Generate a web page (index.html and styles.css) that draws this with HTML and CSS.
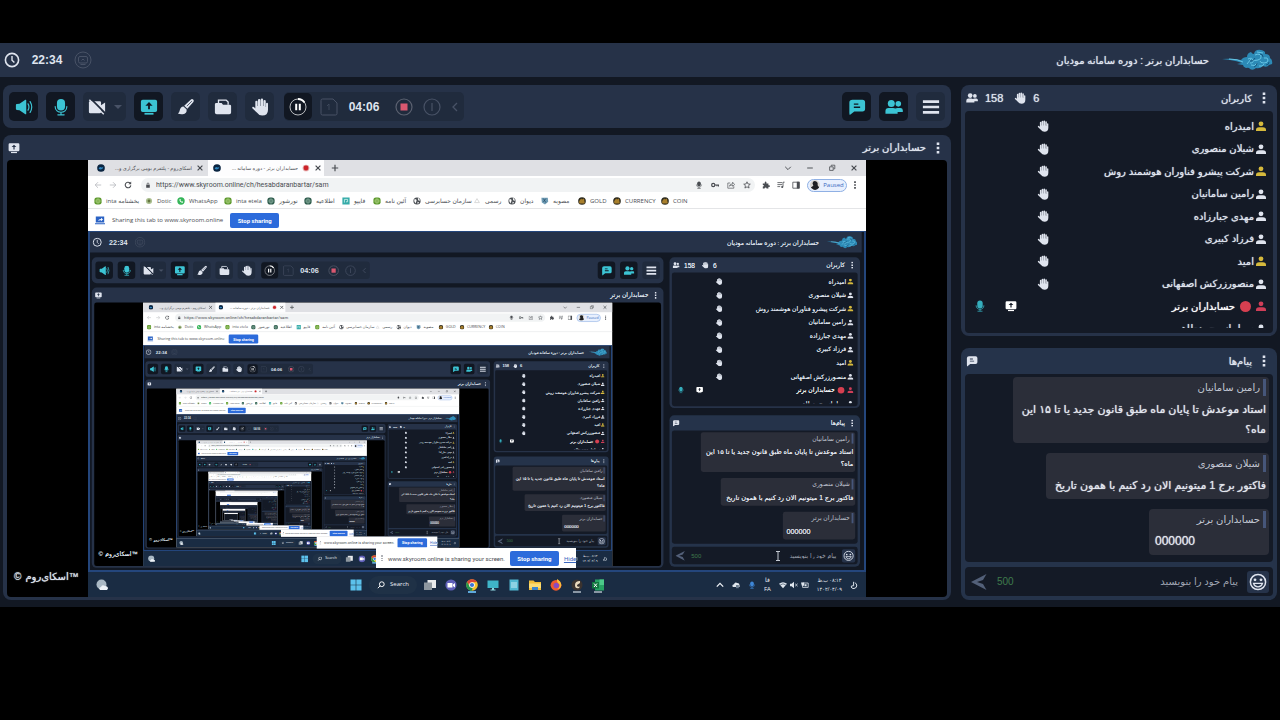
FILE: index.html
```html
<!DOCTYPE html>
<html lang="fa">
<head>
<meta charset="utf-8">
<meta name="viewport" content="width=device-width, initial-scale=1">
<title>حسابداران برتر : دوره سامانه مودیان</title>
<link rel="stylesheet" href="styles.css">
<script src="mirror.js" defer></script>
</head>
<body>
<svg class="sprite" aria-hidden="true">
  <symbol id="i-clock" viewBox="0 0 16 16"><circle cx="8" cy="8" r="6.6" fill="none" stroke="currentColor" stroke-width="1.6"/><path d="M8 4v4.2l2.4 2.4" fill="none" stroke="currentColor" stroke-width="1.4"/></symbol>
  <symbol id="i-badge" viewBox="0 0 18 18"><circle cx="9" cy="9" r="8" fill="none" stroke="currentColor"/><rect x="4.5" y="5.5" width="9" height="6.5" rx="1.5" fill="none" stroke="currentColor"/><path d="M7.5 9.5l1.5-1.500 1.500 1.500M6.500 13.500h5" fill="none" stroke="currentColor"/></symbol>
  <symbol id="i-sound" viewBox="0 0 20 20"><path d="M1 7.800Q1 7 2 6.800L5 6.500 11.500 2q1-.5 1 .8v14.400q0 1.300-1 .8L5 13.500l-3-.3q-1-.2-1-1z" fill="currentColor"/><path d="M14.500 6.500q2 3.500 0 7M16.800 4q3.600 6 0 12" fill="none" stroke="currentColor" stroke-width="1.300" stroke-linecap="round"/></symbol>
  <symbol id="i-mic" viewBox="0 0 20 20"><rect x="5.500" y="1" width="9" height="13" rx="4.500" fill="currentColor"/><path d="M3.500 9.500c0 8.500 13 8.500 13 0M10 16V18M6.500 18.700h7" fill="none" stroke="currentColor" stroke-width="1.300" stroke-linecap="round"/></symbol>
  <symbol id="i-camoff" viewBox="0 0 20 20"><path d="M2 3.500h11q1.500 0 1.500 1.500v3l4.500-3v11l-4.500-3v2.500q0 1.500-1.500 1.500H2.500Q1 17 1 15.500v-11q0-1 1-1z" fill="currentColor"/><path d="M3 .8l17 17" stroke="#202b3d" stroke-width="2"/><path d="M1.500 2l16 16" stroke="currentColor" stroke-width="1.600"/></symbol>
  <symbol id="i-share" viewBox="0 0 20 20"><path fill-rule="evenodd" d="M3 2h14q2 0 2 2v9.500q0 2-2 2H3q-2 0-2-2V4q0-2 2-2zM10 4.500L6 8.500h3v4h2v-4h3z" fill="currentColor"/><path d="M5 17.500h10" stroke="currentColor" stroke-width="2"/></symbol>
  <symbol id="i-brush" viewBox="0 0 20 20"><path d="M18 1.700q1.300 1.300.2 2.800L11.500 12 8 8.700l7.200-6.800q1.300-1.200 2.800-.2z" fill="currentColor"/><path d="M16.500 3.500l-5.500 5.500" stroke="#202b3d" stroke-width=".8"/><path d="M7.200 9.500l3.500 3.300Q11.200 17.500 6.500 18 4 18.500 1 17.300q1.700-1 2-3.300.6-4.200 4.200-4.500z" fill="currentColor"/></symbol>
  <symbol id="i-file" viewBox="0 0 20 20"><path d="M5 5.500V2.300h8.500l2.200 2.200v3" fill="none" stroke="currentColor" stroke-width="1.500"/><path d="M2.500 5.500h6L10 7.500h7.500q1.500 0 1.500 1.500v7q0 2-2 2H3q-2 0-2-2V7q0-1.500 1.500-1.500z" fill="currentColor"/></symbol>
  <symbol id="i-hand" viewBox="0 0 20 20"><path d="M4.800 11V4.200a1.250 1.250 0 012.500 0V9h.4V2.500a1.350 1.350 0 012.700 0V9h.4V2a1.350 1.350 0 012.700 0v7h.4V3.500a1.250 1.250 0 012.500 0V10h.3V6.500a1.100 1.100 0 012.200 0V13q0 6.500-6.500 6.500-3.800 0-5.600-3L1.500 11.500q-.5-1.400.7-1.700 1.100-.2 2.600 1.800z" fill="currentColor"/></symbol>
  <symbol id="i-pause" viewBox="0 0 18 18"><circle cx="9" cy="9" r="8" fill="none" stroke="currentColor" stroke-width="1" opacity=".7"/><path d="M9 1a8 8 0 016.500 3.500" fill="none" stroke="currentColor" stroke-width="1.800"/><path d="M7.200 5.800v6.400M10.800 5.800v6.400" stroke="currentColor" stroke-width="2"/></symbol>
  <symbol id="i-page" viewBox="0 0 18 18"><path d="M2.500 1H13l4 4v10.500Q17 17 15.500 17h-13Q1 17 1 15.500v-13Q1 1 2.500 1z" fill="none" stroke="currentColor"/><path d="M9 6v6M7 8l2-2" fill="none" stroke="currentColor" stroke-width=".7"/></symbol>
  <symbol id="i-stop" viewBox="0 0 18 18"><circle cx="9" cy="9" r="8" fill="none" stroke="#5b6170" stroke-width="1.200"/><rect x="5.500" y="5.500" width="7" height="7" fill="#d95870"/></symbol>
  <symbol id="i-info" viewBox="0 0 18 18"><circle cx="9" cy="9" r="8" fill="none" stroke="currentColor" stroke-width="1.200"/><path d="M9 5v8" stroke="currentColor" stroke-width="1.200"/></symbol>
  <symbol id="i-left" viewBox="0 0 8 10"><path d="M6 1L2 5l4 4" fill="none" stroke="currentColor" stroke-width="1.300"/></symbol>
  <symbol id="i-chat" viewBox="0 0 20 20"><path fill-rule="evenodd" d="M5 2h11q3 0 3 3v7q0 3-3 3H7l-5 4q-.5-1-.5-3V5q0-3 3.500-3zM6.500 6v1.500h5V6zm0 3.500V11h7V9.500z" fill="currentColor"/></symbol>
  <symbol id="i-users" viewBox="0 0 20 20"><circle cx="7" cy="6" r="3.900" fill="currentColor"/><circle cx="14.800" cy="6.500" r="3.100" fill="currentColor"/><path d="M.5 17.500v-3q0-3.500 3.500-3.500h5q1.500 0 2.500.8.800-.8 2.500-.8h3q2.800 0 2.800 2.500V15.500h-5.800v2z" fill="currentColor"/></symbol>
  <symbol id="i-menu" viewBox="0 0 20 20"><path d="M1 4h18M1 10h18M1 16h18" stroke="currentColor" stroke-width="3"/></symbol>
  <symbol id="i-dots" viewBox="0 0 4 12"><path d="M.7.5h2.600v2.500H.7zM.7 4.800h2.600v2.500H.7zM.7 9h2.600v2.500H.7z" fill="currentColor"/></symbol>
  <symbol id="i-user" viewBox="0 0 10 10"><circle cx="5" cy="2.800" r="2.400" fill="currentColor"/><path d="M0 10V8.800Q0 6.600 3 6.200h4q3 .4 3 2.600V10z" fill="currentColor"/></symbol>
  <symbol id="i-smile" viewBox="0 0 18 18"><circle cx="9" cy="9" r="7.600" fill="none" stroke="currentColor" stroke-width="1.500"/><circle cx="6" cy="6.800" r="1.400" fill="currentColor"/><circle cx="12" cy="6.800" r="1.400" fill="currentColor"/><path d="M4.500 10.300h9q-1 3.500-4.500 3.500t-4.500-3.500z" fill="none" stroke="currentColor" stroke-width="1.300"/></symbol>
  <symbol id="i-send" viewBox="0 0 16 16"><path d="M0 8L15.500 0 12 6 6 8l6 2 3.500 6z" fill="currentColor"/></symbol>
  <symbol id="i-logo" viewBox="0 0 52 22"><path d="M1 10q10-1 19 1 2-3 6-3 0-4 4-5 1 2 3 2 1-5 7-4 5 1 4 4 5 0 5 4 3 2 2 6l-3 1q-2 3-6 1-3 3-7 2-3 3-6 1-1-2-4-1-3-1-3-3l-6-1 5-1q-5-2-12-3z" fill="#2c8ab6"/><path d="M8 10q9 0 14 3M27 10q4-2 5 1t-3 3M34 6q5-2 6 1t-3 4-5 0M43 9q4-1 4 2t-4 3-4-2M30 16q4 2 6-2M38 17q4 1 5-2M26 15l4-5M36 3l6 1" fill="none" stroke="#6cc9e8" stroke-width=".9"/><path d="M29 12q3 1 5-3M39 5q3 0 3 3M33 18q3-1 3-4M45 16q3 0 3-3" fill="none" stroke="#14547c" stroke-width=".9"/></symbol>

  <symbol id="b-fav" viewBox="0 0 10 10"><circle cx="5" cy="5" r="4.800" fill="#0b2541"/><path d="M2 6q1-3 3-2t3-1q0 3-3 4-2 0-3-1" fill="#2f86c0"/></symbol>
  <symbol id="b-rec" viewBox="0 0 10 10"><circle cx="5" cy="5" r="4.200" fill="#e3a4a4"/><circle cx="5" cy="5" r="3" fill="#cc2229"/></symbol>
  <symbol id="b-close" viewBox="0 0 10 10"><path d="M2 2l6 6M8 2L2 8" stroke="currentColor" stroke-width="1.500"/></symbol>
  <symbol id="b-plus" viewBox="0 0 10 10"><path d="M5 1v8M1 5h8" stroke="currentColor" stroke-width="1.500"/></symbol>
  <symbol id="b-down" viewBox="0 0 10 10"><path d="M1.500 3.500L5 7l3.500-3.500" fill="none" stroke="currentColor" stroke-width="1.200"/></symbol>
  <symbol id="b-up" viewBox="0 0 10 10"><path d="M1 7l4-4 4 4" fill="none" stroke="currentColor" stroke-width="1.600"/></symbol>
  <symbol id="b-min" viewBox="0 0 10 10"><path d="M1.500 5h7" stroke="currentColor" stroke-width="1.200"/></symbol>
  <symbol id="b-max" viewBox="0 0 10 10"><path d="M2 3.500h4.500V8H2zM4 3V1.500h4.500V6H7" fill="none" stroke="currentColor"/></symbol>
  <symbol id="b-back" viewBox="0 0 10 10"><path d="M9 5H1.500M5 1.500L1.500 5 5 8.500" fill="none" stroke="currentColor"/></symbol>
  <symbol id="b-fwd" viewBox="0 0 10 10"><path d="M1 5h7.500M5 1.500L8.500 5 5 8.500" fill="none" stroke="currentColor"/></symbol>
  <symbol id="b-reload" viewBox="0 0 10 10"><path d="M8.500 5.500A3.500 3.500 0 117.500 2.500" fill="none" stroke="currentColor" stroke-width="1.400"/><path d="M9 .5V4H5.500z" fill="currentColor"/></symbol>
  <symbol id="b-lock" viewBox="0 0 10 10"><path d="M2 4.500h6V9.500H2z" fill="currentColor"/><path d="M3.500 4.500V2.500q1.500-2 3 0v2" fill="none" stroke="currentColor" stroke-width="1.200"/></symbol>
  <symbol id="b-key" viewBox="0 0 10 10"><circle cx="2.800" cy="5" r="2" fill="none" stroke="currentColor" stroke-width="1.500"/><path d="M5 5h4.500v2M7.500 5v1.500" fill="none" stroke="currentColor" stroke-width="1.500"/></symbol>
  <symbol id="b-out" viewBox="0 0 10 10"><path d="M4 2.500H1v6.500h7.500V6.500M3 6.500q.5-3 4-3V1.500l2.500 3L7 6.500v-1.500q-2.500 0-4 1.500z" fill="none" stroke="currentColor" stroke-width=".8"/></symbol>
  <symbol id="b-star" viewBox="0 0 10 10"><path d="M5 1l1.200 2.700 2.900.3-2.200 1.900.7 2.900L5 7.300 2.400 8.800l.7-2.900L.9 4l2.900-.3z" fill="none" stroke="currentColor"/></symbol>
  <symbol id="b-puzzle" viewBox="0 0 10 10"><path d="M1 3h2.500q-.5-2.500 1-2.500T5.500 3H8v2.300q2-.3 2 1T8 7.300V9.500H5.700Q5.700 8 4.500 8T3.300 9.500H1V7q1.500 0 1.500-1T1 5z" fill="currentColor"/></symbol>
  <symbol id="b-list" viewBox="0 0 10 10"><path d="M.5 2h6M.5 4.500h6M.5 7H4M9.500 1.500h-2V7" fill="none" stroke="currentColor"/><circle cx="6.500" cy="7.500" r="1.300" fill="currentColor"/></symbol>
  <symbol id="b-side" viewBox="0 0 10 10"><path d="M1 1.500h8v7.500H1z" fill="none" stroke="currentColor"/><path d="M6 1h3.500v8.500H6z" fill="currentColor"/></symbol>
  <symbol id="b-avatar" viewBox="0 0 12 12"><circle cx="6" cy="6" r="6" fill="#d9d6d2"/><path d="M3 4q1-4 5-2 2 2 1 4l2 3q-3 4-7 2.500L1 9l3-2z" fill="#1e1f22"/></symbol>
  <symbol id="b-present" viewBox="0 0 10 10"><path d="M.8 1.500h8.400v6H.8zM0 8.300h10v1H0z" fill="#2a62c4"/><path d="M3 6q.5-2 3-2V2.800L8 4.600 6 6.300V5.200Q4 5 3 6z" fill="#fff"/></symbol>
  <symbol id="b-caret" viewBox="0 0 6 10"><path d="M1 .500h4M1 9.500h4M3 .500v9" fill="none" stroke="currentColor"/></symbol>
  <symbol id="m-green" viewBox="0 0 10 10"><rect x=".5" y=".5" width="9" height="9" rx="3" fill="#5f9a30"/><path d="M5 1v8M1 5h8M3 3h4v4H3z" fill="none" stroke="#b4d588" stroke-width=".7"/></symbol>
  <symbol id="m-dark" viewBox="0 0 10 10"><rect x=".5" y=".5" width="9" height="9" rx="3.500" fill="#2e5b4c"/><path d="M5 1v8M1 5h8M3 3h4v4H3z" fill="none" stroke="#93b9a8" stroke-width=".7"/></symbol>
  <symbol id="m-dotic" viewBox="0 0 10 10"><circle cx="5" cy="5" r="3.800" fill="#a8bd8d"/><circle cx="5" cy="5" r="1.800" fill="#64763f"/></symbol>
  <symbol id="m-wa" viewBox="0 0 10 10"><circle cx="5" cy="5" r="4.600" fill="#35b559"/><path d="M3 2.800q0 4 4.300 4.400l.4-1.400-1.500-.5-.6.500-1.300-1.300.5-.7L4.300 2.500z" fill="#fff"/></symbol>
  <symbol id="m-teal" viewBox="0 0 10 10"><path d="M.5.500h9v9h-9z" fill="#35aba9"/><path d="M3 7V3h4v3H5" fill="none" stroke="#d5f4ee"/></symbol>
  <symbol id="m-globe" viewBox="0 0 10 10"><circle cx="5" cy="5" r="4.500" fill="#4a4e53"/><path d="M2 2.500q3 0 2.500 2T3 8Q.5 5 2 2.500zM6 1q3 1 2.500 4L6.500 4zM5.500 6l2 .5L6 9z" fill="#fff"/></symbol>
  <symbol id="m-faint" viewBox="0 0 10 10"><path d="M5 2l3 5H2z" fill="none" stroke="#d0d0d0"/></symbol>
  <symbol id="m-shield" viewBox="0 0 10 10"><path d="M.5 1h8L9 6 5 9.500 1 7z" fill="#6f9bb4"/><path d="M3 2l3 5M6 2L3 6" stroke="#28506a"/></symbol>
  <symbol id="m-coin" viewBox="0 0 10 10"><circle cx="5" cy="5" r="4.800" fill="#2d2a1e"/><path d="M1.500 8V5l2.500-3 1 1 2.500-1 1 6z" fill="#a87f2c"/></symbol>

  <symbol id="t-weather" viewBox="0 0 12 12"><circle cx="5.500" cy="5.500" r="5" fill="#a9b8c4"/><path d="M4 11q-2-2 1-3 1-3 4-1 3 0 3 2.500L11 11z" fill="#eef3f8"/></symbol>
  <symbol id="t-win" viewBox="0 0 12 12"><path d="M.5.500h5.200v5.200H.5zM6.300.500h5.200v5.200H6.300zM.5 6.300h5.200v5.200H.5zM6.300 6.300h5.200v5.200H6.300z" fill="#5cc1ec"/></symbol>
  <symbol id="t-search" viewBox="0 0 10 10"><circle cx="6" cy="4" r="3" fill="none" stroke="#fff" stroke-width="1.200"/><path d="M4 6L1 9" stroke="#fff" stroke-width="1.200"/></symbol>
  <symbol id="t-tasks" viewBox="0 0 12 12"><path d="M3.500 1H12v8H3.500z" fill="#e8eaec"/><path d="M0 3.500h8V11H0z" fill="#8e979f"/></symbol>
  <symbol id="t-teams" viewBox="0 0 12 12"><circle cx="6" cy="6" r="5.600" fill="#5f5fb8"/><path d="M2.500 4h5v4.500h-5zM8 5.500L10 4v4.500L8 7z" fill="#fff"/></symbol>
  <symbol id="t-chrome" viewBox="0 0 12 12"><circle cx="6" cy="6" r="5.800" fill="#f2c12e"/><path d="M1 3a5.800 5.800 0 0110 0L6 3.300 4 7z" fill="#db4437"/><path d="M1 3l3 5 2.500 1L6 11.800A5.800 5.800 0 011 3z" fill="#23984f"/><circle cx="6" cy="6" r="2.800" fill="#fff"/><circle cx="6" cy="6" r="2.100" fill="#3a76d8"/></symbol>
  <symbol id="t-pc" viewBox="0 0 12 12"><path d="M.5 1.500h11v7.500H.5z" fill="#3fb4c8"/><path d="M5 9h2v2H5zM3.500 10.500h5v1h-5z" fill="#8fd7e2"/></symbol>
  <symbol id="t-note" viewBox="0 0 12 12"><path d="M1.500.500h9v11h-9z" fill="#50b7d0"/><path d="M3 4h6M3 6h6M3 8h6" stroke="#e7fbff" stroke-width=".8"/></symbol>
  <symbol id="t-folder" viewBox="0 0 12 12"><path d="M0 1.500h4.500L6 3h6v8H0z" fill="#f1bd3a"/><path d="M0 4.500h12V9H0z" fill="#fbdc74"/><path d="M3 8h6v3H3z" fill="#3c85cc"/></symbol>
  <symbol id="t-fox" viewBox="0 0 12 12"><circle cx="6" cy="6.300" r="5.400" fill="#ee5a2f"/><circle cx="6.300" cy="6.500" r="2.800" fill="#8a4ac0"/><path d="M7 0q4 2 4.300 6-.5 4-4 4 3-2 2-5Q6.500 3.500 7 0z" fill="#fbbd3b"/></symbol>
  <symbol id="t-c" viewBox="0 0 12 12"><circle cx="6" cy="6" r="5.500" fill="#3b332f"/><path d="M9 2Q4 2 4 6t4 3l1-1.500Q5.500 8.500 6 6l3-2z" fill="#ead9bd"/></symbol>
  <symbol id="t-excel" viewBox="0 0 12 12"><path d="M3 .500h9v11H3z" fill="#27a264"/><path d="M7.500.500H12V6H7.500z" fill="#4cc98a"/><path d="M0 3h7v6.500H0z" fill="#12763f"/><path d="M2 4.500l3 3.500M5 4.500L2 8" stroke="#fff"/></symbol>
  <symbol id="t-cloud" viewBox="0 0 10 10"><path d="M1 7.500q-1.500-3 1.500-3.500 1-3 4-1.500 3 0 3 3v2z" fill="#dfe6ee"/><path d="M5 5h3.500v4H5z" fill="#6d7f92"/></symbol>
  <symbol id="t-wifi" viewBox="0 0 10 10"><path d="M0 3.500q5-4 10 0L5 9z" fill="#dfe6ee"/><path d="M1.500 5q3.500-3 7 0" fill="none" stroke="#1a2c42" stroke-width=".7"/></symbol>
  <symbol id="t-mute" viewBox="0 0 10 10"><path d="M0 3.500h2L5 1v8L2 6.500H0z" fill="#dfe6ee"/><path d="M6.500 3.500l3 3M9.500 3.500l-3 3" stroke="#dfe6ee"/></symbol>
  <symbol id="t-bat" viewBox="0 0 10 10"><path d="M2 2.500h7v5.500H2z" fill="none" stroke="#dfe6ee"/><path d="M0 2h4v4H1zM4.500 4H7v2.500H4.500z" fill="#dfe6ee"/></symbol>
  <symbol id="t-moon" viewBox="0 0 10 10"><path d="M4.500 1v5M4.500 6Q1 5.500 1.500 7.500T5 9.500q4-1 3.500-4.500L6.500 2" fill="none" stroke="#dfe6ee" stroke-width="1.200"/></symbol>
</svg>

<div class="room">
  <header class="topbar">
    <svg class="s16"><use href="#i-clock"/></svg>
    <time class="clock">22:34</time>
    <svg class="s18 dim"><use href="#i-badge"/></svg>
    <h1 class="topic" dir="rtl">حسابداران برتر : دوره سامانه مودیان</h1>
    <svg class="logo"><use href="#i-logo"/></svg>
  </header>

  <div class="columns">
    <main class="main">
      <div class="tools">
        <button class="tool on" aria-label="Speaker"><svg><use href="#i-sound"/></svg></button>
        <button class="tool on" aria-label="Microphone"><svg><use href="#i-mic"/></svg></button>
        <button class="tool split" aria-label="Camera"><svg><use href="#i-camoff"/></svg><i class="caret"></i></button>
        <button class="tool on" aria-label="Share screen"><svg><use href="#i-share"/></svg></button>
        <button class="tool" aria-label="Whiteboard"><svg><use href="#i-brush"/></svg></button>
        <button class="tool" aria-label="Files"><svg><use href="#i-file"/></svg></button>
        <button class="tool" aria-label="Raise hand"><svg><use href="#i-hand"/></svg></button>
        <div class="recorder">
          <button class="rec on" aria-label="Pause recording"><svg class="s18"><use href="#i-pause"/></svg></button>
          <button class="rec page" aria-label="New page"><svg class="s18"><use href="#i-page"/></svg></button>
          <time class="clock">04:06</time>
          <button class="rec stop" aria-label="Stop recording"><svg class="s18"><use href="#i-stop"/></svg></button>
          <button class="rec" aria-label="Information"><svg class="s18"><use href="#i-info"/></svg></button>
          <button class="rec fold" aria-label="Collapse"><svg class="s10"><use href="#i-left"/></svg></button>
        </div>
        <button class="tool on end" aria-label="Messages"><svg><use href="#i-chat"/></svg></button>
        <button class="tool on" aria-label="Users"><svg><use href="#i-users"/></svg></button>
        <button class="tool" aria-label="Menu"><svg><use href="#i-menu"/></svg></button>
      </div>

      <section class="panel">
        <div class="head">
          <svg class="s12"><use href="#i-share"/></svg>
          <h2 class="title" dir="rtl">حسابداران برتر</h2>
          <button class="more" aria-label="More"><svg><use href="#i-dots"/></svg></button>
        </div>
        <div class="stage">
          <div class="screen">
            <div class="tabs">
              <div class="tab"><svg class="s8"><use href="#b-fav"/></svg><span class="tabname" dir="rtl">اسکای‌روم - پلتفرم بومی برگزاری و...</span><svg class="s8"><use href="#b-close"/></svg></div>
              <div class="tab current"><svg class="s8"><use href="#b-fav"/></svg><span class="tabname" dir="rtl">حسابداران برتر - دوره سامانه ...</span><svg class="s8"><use href="#b-rec"/></svg><svg class="s8"><use href="#b-close"/></svg></div>
              <button class="mini" aria-label="New tab"><svg class="s8"><use href="#b-plus"/></svg></button>
              <div class="window">
                <svg class="s8"><use href="#b-down"/></svg><svg class="s8"><use href="#b-min"/></svg><svg class="s8"><use href="#b-max"/></svg><svg class="s8"><use href="#b-close"/></svg>
              </div>
            </div>
            <div class="address">
              <svg class="s8 pale"><use href="#b-back"/></svg><svg class="s8 pale"><use href="#b-fwd"/></svg><svg class="s8"><use href="#b-reload"/></svg>
              <div class="field">
                <svg class="s6"><use href="#b-lock"/></svg>
                <input class="url" aria-label="Address" value="https://www.skyroom.online/ch/hesabdaranbartar/sam">
                <svg class="s8"><use href="#i-mic"/></svg><svg class="s8"><use href="#b-key"/></svg><svg class="s8"><use href="#b-out"/></svg><svg class="s8"><use href="#b-star"/></svg>
              </div>
              <svg class="s8"><use href="#b-puzzle"/></svg><svg class="s8"><use href="#b-list"/></svg><svg class="s8"><use href="#b-side"/></svg>
              <button class="profile"><svg class="s10"><use href="#b-avatar"/></svg>Paused</button>
              <svg class="s8"><use href="#i-dots"/></svg>
            </div>
            <nav class="bookmarks">
              <a href="#"><svg><use href="#m-green"/></svg>inta بخشنامه</a>
              <a href="#"><svg><use href="#m-dotic"/></svg>Dotic</a>
              <a href="#"><svg><use href="#m-wa"/></svg>WhatsApp</a>
              <a href="#"><svg><use href="#m-green"/></svg>inta etela</a>
              <a href="#"><svg><use href="#m-dark"/></svg>نورشور</a>
              <a href="#"><svg><use href="#m-dark"/></svg>اطلاعیه</a>
              <a href="#"><svg><use href="#m-teal"/></svg>فایپو</a>
              <a href="#"><svg><use href="#m-green"/></svg>آئین نامه</a>
              <a href="#"><svg><use href="#m-globe"/></svg>سازمان حسابرسی</a>
              <a href="#"><svg><use href="#m-faint"/></svg>رسمی</a>
              <a href="#"><svg><use href="#m-globe"/></svg>دیوان</a>
              <a href="#"><svg><use href="#m-shield"/></svg>مصوبه</a>
              <a href="#"><svg><use href="#m-coin"/></svg>GOLD</a>
              <a href="#"><svg><use href="#m-coin"/></svg>CURRENCY</a>
              <a href="#"><svg><use href="#m-coin"/></svg>COIN</a>
            </nav>
            <div class="sharing">
              <svg class="s10"><use href="#b-present"/></svg>
              <span>Sharing this tab to www.skyroom.online</span>
              <button class="blue">Stop sharing</button>
            </div>
            <div class="mirror"></div>
            <div class="taskbar">
              <svg class="weather"><use href="#t-weather"/></svg>
              <div class="apps">
                <svg><use href="#t-win"/></svg>
                <button class="search"><svg class="s8"><use href="#t-search"/></svg>Search</button>
                <svg><use href="#t-tasks"/></svg><svg><use href="#t-teams"/></svg><svg class="open"><use href="#t-chrome"/></svg><svg><use href="#t-pc"/></svg><svg><use href="#t-note"/></svg><svg><use href="#t-folder"/></svg><svg><use href="#t-fox"/></svg><svg class="idle"><use href="#t-c"/></svg><svg class="idle"><use href="#t-excel"/></svg>
              </div>
              <div class="tray">
                <svg class="s8"><use href="#b-up"/></svg><svg class="s8"><use href="#t-cloud"/></svg><svg class="s8 azure"><use href="#i-mic"/></svg>
                <span class="lang">فا<br>FA</span>
                <span class="status"><svg class="s8"><use href="#t-wifi"/></svg><svg class="s8"><use href="#t-mute"/></svg><svg class="s8"><use href="#t-bat"/></svg></span>
                <span class="date" dir="rtl">۰۸:۱۳ ب.ظ<br>۱۴۰۲/۰۴/۰۹</span>
                <svg class="s8"><use href="#t-moon"/></svg>
              </div>
            </div>
            <svg class="pointer"><use href="#b-caret"/></svg>
            <div class="notice">
              <span class="grip"></span>
              <span>www.skyroom.online is sharing your screen.</span>
              <button class="blue">Stop sharing</button>
              <a href="#">Hide</a>
            </div>
          </div>
          <p class="mark"><span>©</span> <bdi>اسکای‌روم</bdi><span>™</span></p>
        </div>
      </section>
    </main>

    <aside class="side">
      <section class="panel">
        <div class="head">
          <svg class="s12"><use href="#i-users"/></svg><span class="count">158</span>
          <svg class="s12 sep"><use href="#i-hand"/></svg><span class="count">6</span>
          <h2 class="title" dir="rtl">کاربران</h2>
          <button class="more" aria-label="More"><svg><use href="#i-dots"/></svg></button>
        </div>
        <div class="well users">
          <ul class="people" dir="rtl">
            <li class="gold"><svg class="who"><use href="#i-user"/></svg><span>امیدراه</span><svg class="flag"><use href="#i-hand"/></svg></li>
            <li><svg class="who"><use href="#i-user"/></svg><span>شیلان منصوری</span><svg class="flag"><use href="#i-hand"/></svg></li>
            <li class="gold"><svg class="who"><use href="#i-user"/></svg><span>شرکت پیشرو فناوران هوشمند روش</span><svg class="flag"><use href="#i-hand"/></svg></li>
            <li><svg class="who"><use href="#i-user"/></svg><span>رامین سامانیان</span><svg class="flag"><use href="#i-hand"/></svg></li>
            <li><svg class="who"><use href="#i-user"/></svg><span>مهدی جبارزاده</span><svg class="flag"><use href="#i-hand"/></svg></li>
            <li><svg class="who"><use href="#i-user"/></svg><span>فرزاد کبیری</span><svg class="flag"><use href="#i-hand"/></svg></li>
            <li class="gold"><svg class="who"><use href="#i-user"/></svg><span>امید</span><svg class="flag"><use href="#i-hand"/></svg></li>
            <li><svg class="who"><use href="#i-user"/></svg><span>منصورزرکش اصفهانی</span><svg class="flag"><use href="#i-hand"/></svg></li>
            <li class="host"><svg class="who"><use href="#i-user"/></svg><span><i class="dot"></i>حسابداران برتر</span><b></b><svg class="flag"><use href="#i-share"/></svg><svg class="flag teal"><use href="#i-mic"/></svg></li>
            <li><svg class="who"><use href="#i-user"/></svg><span>سولماز محمدطاهر</span></li>
          </ul>
        </div>
      </section>

      <section class="panel chat">
        <div class="head">
          <svg class="s12"><use href="#i-chat"/></svg>
          <h2 class="title" dir="rtl">پیام‌ها</h2>
          <button class="more" aria-label="More"><svg><use href="#i-dots"/></svg></button>
        </div>
        <div class="well talk" dir="rtl">
          <article class="msg"><h3>رامین سامانیان</h3><p>استاد موعدش تا پایان ماه طبق قانون جدید یا تا ۱۵ این<br>ماه؟</p></article>
          <article class="msg"><h3>شیلان منصوری</h3><p>فاکتور برج 1 میتونیم الان رد کنیم با همون تاریخ</p></article>
          <article class="msg short"><h3>حسابداران برتر</h3><p dir="ltr">000000</p></article>
        </div>
        <form class="well compose" dir="rtl">
          <button type="button" class="emoji" aria-label="Emoji"><svg class="s18"><use href="#i-smile"/></svg></button>
          <input class="draft" aria-label="پیام" placeholder="پیام خود را بنویسید">
          <span class="left">500</span>
          <button type="button" class="send" aria-label="Send"><svg class="s16"><use href="#i-send"/></svg></button>
        </form>
      </section>
    </aside>
  </div>
</div>
</body>
</html>
```
FILE: mirror.js
```js
// The shared screen shows the room itself, so each copy carries the next one.
const DEPTH = 8;
const room = document.querySelector('.room');
const blank = room.cloneNode(true);
let slot = room.querySelector('.mirror');
for (let level = 0; level < DEPTH; level++) {
  const copy = blank.cloneNode(true);
  copy.setAttribute('aria-hidden', 'true');
  copy.inert = true;
  slot.append(copy);
  slot = copy.querySelector('.mirror');
}
```
FILE: styles.css
```css
* { box-sizing: border-box; }
body {
  margin: 0;
  padding-top: 43px;
  background: #000;
  color: #dfe4ee;
  font-family: "Liberation Sans", "DejaVu Sans", sans-serif;
  font-size: 10px;
}
h1, h2, h3, p, ul { margin: 0; padding: 0; font-size: 10px; font-weight: normal; list-style: none; }
button { border: 0; padding: 0; background: none; color: inherit; font: inherit; display: flex; align-items: center; justify-content: center; }
input { border: 0; padding: 0; background: none; color: inherit; font: inherit; min-width: 0; outline: 0; }
a { color: inherit; text-decoration: none; }
svg { display: block; flex: none; width: 12px; height: 12px; }
.sprite { position: absolute; width: 0; height: 0; }
.s6 { width: 6px; height: 6px; }
.s8 { width: 8px; height: 8px; }
.s10 { width: 10px; height: 10px; }
.s12 { width: 12px; height: 12px; }
.s16 { width: 16px; height: 16px; }
.s18 { width: 18px; height: 18px; }
.dim { color: #485266; }

.room { background: #121823; padding-bottom: 7px; overflow: hidden; }
.topbar {
  display: flex; align-items: center; gap: 12px;
  height: 34px; padding: 0 7px 0 4px;
  background: #263248;
}
.clock { font-size: 12px; font-weight: bold; width: 30px; text-align: center; white-space: nowrap; display: flex; justify-content: center; }
.topic { margin-left: auto; }
.topic, .title, .people span, .msg p, .count, .mark { text-shadow: 0 0 1px currentColor; }
.logo { width: 52px; height: 22px; }

.columns {
  display: grid; grid-template-columns: minmax(0, 1fr) 316px; gap: 10px;
  padding: 8px 3px 0;
}
.main { display: flex; flex-direction: column; gap: 7px; }
.side { display: flex; flex-direction: column; gap: 12px; }

.tools {
  display: flex; align-items: center; gap: 8px;
  height: 43px; padding: 0 6px;
  background: #263248; border-radius: 8px;
}
.tool { width: 29px; height: 29px; border-radius: 5px; background: #202b3d; }
.tool svg { width: 18px; height: 18px; }
.tool.on { background: #111722; color: #3cc4d4; }
.split { width: 43px; gap: 8px; }
.caret { border: 4px solid transparent; border-top-color: #485266; border-bottom: 0; }
.recorder { display: flex; align-items: center; height: 29px; margin-left: 2px; background: #202b3d; border-radius: 5px; color: #485266; }
.recorder .clock { width: 38px; margin-right: 7px; color: #dfe4ee; }
.rec { width: 28px; height: 27px; border-radius: 5px; }
.rec.on { background: #111722; color: #fff; }
.page { width: 33px; }
.fold { width: 18px; }
.end { margin-left: auto; }

.panel { background: #263248; border-radius: 8px; padding: 0 4px 3px; }
.head { display: flex; align-items: center; height: 26px; padding: 0 6px 0 1px; }
.main .head { height: 25px; }
.title { margin-left: auto; }
.more { width: 6px; margin-left: 9px; }
.more svg { width: 4px; height: 12px; }
.count { font-size: 11px; margin-left: 7px; }
.sep { margin-left: 11px; }
.well { background: #141a26; border-radius: 4px; }

.stage { position: relative; display: flex; justify-content: center; background: #000; border-radius: 4px; overflow: hidden; }
.mark { position: absolute; left: 7px; bottom: 11px; display: flex; line-height: 18px; }
.mark bdi { margin-left: 4px; }

.users { height: 222px; padding-top: 4px; }
.people { height: 213px; overflow: hidden; display: grid; grid-auto-rows: calc(225px / 10); align-content: start; }
.people li {
  display: grid; grid-template-columns: 10px minmax(0, 1fr) 32px 32px 30px; align-items: center; justify-items: center;
  padding-right: 7px;
}
.people span { justify-self: stretch; padding-right: 2px; display: flex; align-items: center; gap: 5px; white-space: nowrap; }
.who { width: 10px; height: 10px; }
.flag { width: 12px; height: 12px; }
.gold .who { color: #d5b93c; }
.host .who { color: #cf3e58; }
.host { color: #fff; }
.dot { width: 11px; height: 11px; border-radius: 50%; background: #d63f50; margin-right: 3px; }
.teal { color: #35aebd; }

.chat { padding-bottom: 4px; background: #25334a; }
.talk { display: flex; flex-direction: column; align-items: flex-start; gap: 10px; height: 188px; padding: 3px 4px; }
.msg { background: #2b2e39; border-radius: 4px; padding: 2px 3px 4px 9px; }
.msg h3 { line-height: 17px; border-right: 3px solid #46567a; padding-right: 3px; color: #c3c8d4; }
.msg p { font-size: 11px; line-height: 20px; padding-top: 3px; white-space: nowrap; color: #e2e6ee; }
.short { width: 120px; }
.msg.short p { margin-left: -3px; font-size: 12px; }
.compose { display: flex; align-items: center; height: 29px; margin-top: 5px; padding: 0 4px 0 6px; }
.emoji { width: 22px; height: 22px; border-radius: 3px; background: #26334a; }
.draft { flex: 1; padding-right: 9px; }
.draft::placeholder { color: #a0a6b3; opacity: 1; }
.left { color: #3f7a4c; }
.send { margin-right: 10px; color: #536079; }

.screen { position: relative; width: 778px; background: #fff; color: #4a4d52; font-family: "Open Sans", "DejaVu Sans", sans-serif; font-size: 6px; line-height: 9px; }
.tabs { display: flex; height: 16px; padding-left: 4px; background: #dfe0e4; }
.tab { display: flex; align-items: center; gap: 4px; width: 116px; padding: 0 4px 0 5px; }
.tabname { flex: 1; overflow: hidden; white-space: nowrap; font-size: 5px; }
.current { background: #fdfdfe; padding-right: 2px; }
.mini { width: 22px; }
.window { display: flex; align-items: center; gap: 14px; margin-left: auto; padding-right: 8px; }
.address { display: flex; align-items: center; gap: 7px; height: 18px; padding: 0 7px 0 6px; }
.pale { color: #b5b8bc; }
.field { flex: 1; display: flex; align-items: center; gap: 8px; height: 14px; margin-left: 2px; padding: 0 4px; border-radius: 7px; background: #f1f3f4; }
.url { flex: 1; font-family: Roboto, sans-serif; font-size: 7px; margin-left: -3px; }
.profile { height: 13px; width: 40px; gap: 3px; margin-right: -3px; border: 1px solid #8fb0e4; border-radius: 7px; background: #e8f0fe; color: #3b68c0; }
.bookmarks {
  display: grid; align-items: center; height: 15px; padding-left: 6px;
  grid-template-columns: 51px 32px 47px 43px 37px 38px 31px 40px 60px 35px 33px 37px 35px 48px auto;
  border-bottom: 1px solid #e4e5e7;
}
.bookmarks a { display: flex; align-items: center; gap: 4px; white-space: nowrap; }
.bookmarks svg { width: 8px; height: 8px; }
.sharing { display: flex; align-items: center; gap: 7px; height: 22px; padding-left: 7px; }
.blue { flex: none; width: 49px; height: 15px; border-radius: 2px; background: #2c6bdb; color: #fff; font-family: Roboto, sans-serif; font-weight: bold; }
.mirror { height: 341px; overflow: hidden; border: 2px solid #24467c; border-top-width: 1px; background: #121823; }
.mirror > .room {
  width: 1280px; transform: scale(.603); transform-origin: 0 0;
  color: #dfe4ee; font-family: "Liberation Sans", "DejaVu Sans", sans-serif; font-size: 10px; line-height: normal;
}
.taskbar { display: grid; grid-template-columns: 1fr auto 1fr; align-items: center; height: 25px; padding: 0 8px; background: #1a2c43; color: #eef2f7; }
.apps { display: flex; align-items: center; gap: 9px; }
.apps svg { width: 12px; height: 12px; }
.apps .search { width: 48px; height: 18px; gap: 5px; margin: 0 -2px; border-radius: 9px; background: #1f3146; }
.apps .search svg { width: 8px; height: 8px; }
.open { box-shadow: 0 4px 0 -2px #5ea8dc; }
.idle { box-shadow: 0 4px 0 -2px #8a97a5; }
.tray { display: flex; align-items: center; justify-content: flex-end; gap: 8px; text-align: center; }
.status { display: flex; gap: 3px; }
.date { white-space: nowrap; font-size: 5px; }
.azure { color: #3e87d8; }
.pointer { position: absolute; right: 85px; bottom: 36px; width: 6px; height: 10px; color: #c5cad3; }
.notice {
  position: absolute; left: 288px; bottom: 29px;
  display: flex; align-items: center; gap: 5px;
  width: 200px; height: 20px; padding: 0 5px; background: #fff; white-space: nowrap;
  font-family: Roboto, sans-serif;
}
.grip { width: 3px; height: 6px; border: 1px dotted #b0b3b8; border-width: 0 1px; }
.notice .blue { margin-left: auto; }
.notice a { color: #3b68c0; text-decoration: underline; }
```
